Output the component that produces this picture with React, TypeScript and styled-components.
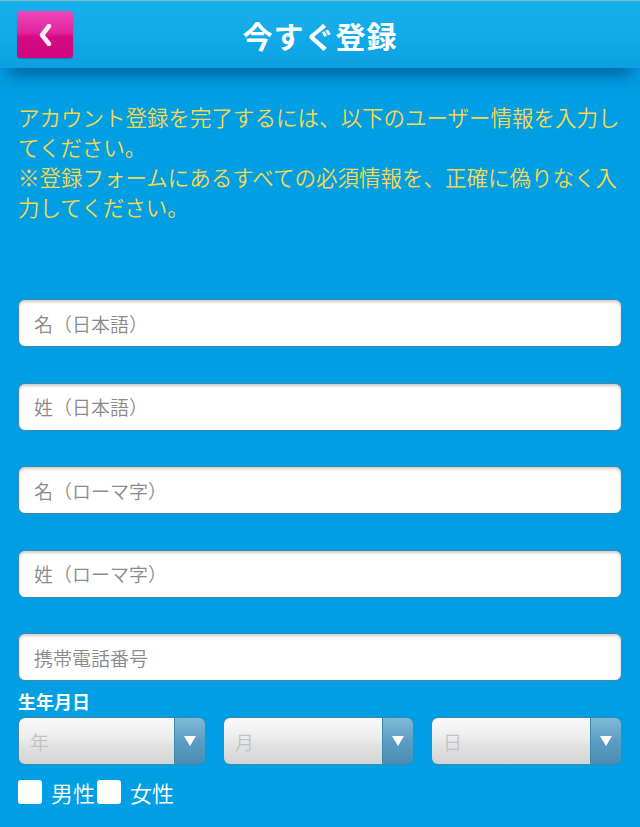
import React from 'react';
import styled, { createGlobalStyle } from 'styled-components';

const GlobalStyle = createGlobalStyle`
  html, body {
    margin: 0;
    padding: 0;
    background: #009ee3;
  }
  body {
    font-family: 'Noto Sans CJK JP', 'Noto Sans', sans-serif;
  }
  * { box-sizing: border-box; }
`;

const Page = styled.div`
  width: 640px;
  min-height: 827px;
  background: #009ee3;
  overflow: hidden;
`;

const Header = styled.header`
  position: relative;
  z-index: 1;
  height: 68px;
  display: flex;
  align-items: center;
  justify-content: center;
  border-top: 1px solid #8fb4c6;
  background: linear-gradient(to bottom, #16b0ec 0%, #12aae8 55%, #0d9fe0 100%);
  box-shadow: 0 16px 14px -8px rgba(0, 70, 125, 0.6);
`;

const BackButton = styled.button`
  position: absolute;
  left: 17px;
  top: 10px;
  width: 56px;
  height: 47px;
  border: none;
  border-radius: 3px;
  padding: 0;
  display: flex;
  align-items: center;
  justify-content: center;
  background: linear-gradient(to bottom, #ec48b9 0%, #e2249f 45%, #d50a84 55%, #cf067e 100%);
  box-shadow: 0 1px 1px rgba(0, 60, 110, 0.35);
`;

const Title = styled.h1`
  margin: 0;
  color: #ffffff;
  font-size: 30px;
  font-weight: 700;
  letter-spacing: 1px;
`;

const Content = styled.main`
  padding: 34px 18px 0;
`;

const Intro = styled.p`
  margin: 0;
  color: #f8d84c;
  font-size: 21.5px;
  font-weight: 350;
  line-height: 30px;
`;

const Fields = styled.div`
  margin-top: 77px;
  display: flex;
  flex-direction: column;
  gap: 35.5px;
`;

const TextInput = styled.input`
  display: block;
  width: 100%;
  height: 48px;
  margin: 0;
  border: 1px solid #3f86ad;
  border-radius: 7px;
  padding: 0 15px;
  background: #ffffff;
  box-shadow: inset 0 2px 3px rgba(0, 0, 0, 0.2);
  font-family: 'Noto Sans CJK JP', sans-serif;
  font-size: 19px;
  font-weight: 350;
  color: #333;
  outline: none;
  &::placeholder {
    color: #8a8a8a;
  }
`;

const Label = styled.div`
  margin-top: 8px;
  color: #ffffff;
  font-size: 18px;
  font-weight: 700;
  line-height: 24px;
`;

const SelectRow = styled.div`
  margin-top: 4px;
  display: grid;
  grid-template-columns: 188px 191px 191px;
  justify-content: space-between;
`;

const SelectBox = styled.div`
  height: 48px;
  display: flex;
  border: 1px solid #3f86ad;
  border-radius: 7px;
  overflow: hidden;
`;

const SelectValue = styled.div`
  flex: 1;
  display: flex;
  align-items: center;
  padding: 0 11px;
  color: #c2c2c2;
  font-size: 19px;
  font-weight: 350;
  background: linear-gradient(to bottom, #f9f9f9 0%, #eeeeee 40%, #e2e2e2 60%, #d4d4d4 100%);
`;

const SelectArrow = styled.div`
  width: 31px;
  display: flex;
  align-items: center;
  justify-content: center;
  border-left: 1px solid #3f86ad;
  background: linear-gradient(to bottom, #80bbd6 0%, #5c9ec3 50%, #4a8eb4 100%);
`;

const GenderRow = styled.div`
  margin-top: 14px;
  display: flex;
  align-items: center;
`;

const GenderOption = styled.label`
  display: flex;
  align-items: center;
  gap: 9px;
  margin-right: 2px;
  color: #ffffff;
  font-size: 22px;
  font-weight: 350;
  line-height: 26px;
`;

const Box = styled.span`
  width: 24px;
  height: 24px;
  border-radius: 3px;
  background: #ffffff;
`;

const Triangle = () => (
  <svg width="12" height="10" viewBox="0 0 12 10">
    <path d="M0 0 H12 L6 10 Z" fill="#ffffff" />
  </svg>
);

const Select: React.FC<{ placeholder: string }> = ({ placeholder }) => (
  <SelectBox>
    <SelectValue>{placeholder}</SelectValue>
    <SelectArrow>
      <Triangle />
    </SelectArrow>
  </SelectBox>
);

const App: React.FC = () => {
  const fields = ['名（日本語）', '姓（日本語）', '名（ローマ字）', '姓（ローマ字）', '携帯電話番号'];

  return (
    <Page>
      <GlobalStyle />
      <Header>
        <BackButton aria-label="戻る">
          <svg width="14" height="22" viewBox="0 0 14 22">
            <path d="M11 2 L4 11 L11 20" fill="none" stroke="#fdeef6" strokeWidth="4.5" strokeLinejoin="round" strokeLinecap="round" />
          </svg>
        </BackButton>
        <Title>今すぐ登録</Title>
      </Header>
      <Content>
        <Intro>
          アカウント登録を完了するには、以下のユーザー情報を入力してください。
          <br />
          ※登録フォームにあるすべての必須情報を、正確に偽りなく入力してください。
        </Intro>
        <Fields>
          {fields.map(f => (
            <TextInput key={f} placeholder={f} />
          ))}
        </Fields>
        <Label>生年月日</Label>
        <SelectRow>
          <Select placeholder="年" />
          <Select placeholder="月" />
          <Select placeholder="日" />
        </SelectRow>
        <GenderRow>
          <GenderOption>
            <Box />
            男性
          </GenderOption>
          <GenderOption>
            <Box />
            女性
          </GenderOption>
        </GenderRow>
      </Content>
    </Page>
  );
};

export default App;
